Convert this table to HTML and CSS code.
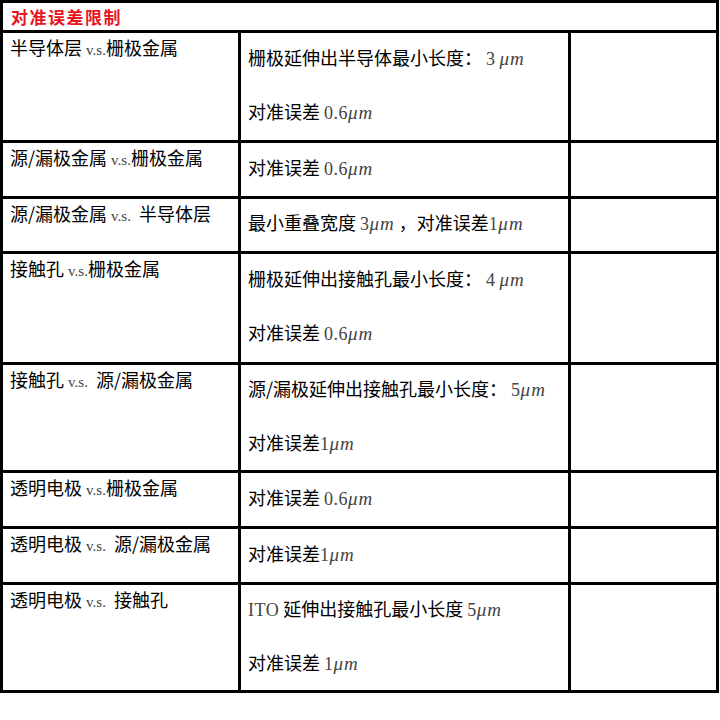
FILE: index.html
```html
<!DOCTYPE html>
<html lang="zh">
<head>
<meta charset="utf-8">
<link rel="stylesheet" href="styles.css">
</head>
<body>
<div class="grid">
  <div class="cell head">对准误差限制</div>

  <div class="cell c1 h107">半导体层 <span class="vs">v.s.</span>栅极金属</div>
  <div class="cell c2"><p>栅极延伸出半导体最小长度： <span class="num">3</span> <span class="um">μm</span></p><p>对准误差 <span class="num">0.6</span><span class="um">μm</span></p></div>
  <div class="cell c3"></div>

  <div class="cell c1">源/漏极金属 <span class="vs">v.s.</span>栅极金属</div>
  <div class="cell c2"><p>对准误差 <span class="num">0.6</span><span class="um">μm</span></p></div>
  <div class="cell c3"></div>

  <div class="cell c1">源/漏极金属 <span class="vs">v.s.</span>&nbsp; 半导体层</div>
  <div class="cell c2"><p>最小重叠宽度 <span class="num">3</span><span class="um">μm</span> ，对准误差<span class="num">1</span><span class="um">μm</span></p></div>
  <div class="cell c3"></div>

  <div class="cell c1">接触孔 <span class="vs">v.s.</span>栅极金属</div>
  <div class="cell c2"><p>栅极延伸出接触孔最小长度： <span class="num">4</span> <span class="um">μm</span></p><p>对准误差 <span class="num">0.6</span><span class="um">μm</span></p></div>
  <div class="cell c3"></div>

  <div class="cell c1">接触孔 <span class="vs">v.s.</span>&nbsp; 源/漏极金属</div>
  <div class="cell c2"><p>源/漏极延伸出接触孔最小长度： <span class="num">5</span><span class="um">μm</span></p><p>对准误差<span class="num">1</span><span class="um">μm</span></p></div>
  <div class="cell c3"></div>

  <div class="cell c1">透明电极 <span class="vs">v.s.</span>栅极金属</div>
  <div class="cell c2"><p>对准误差 <span class="num">0.6</span><span class="um">μm</span></p></div>
  <div class="cell c3"></div>

  <div class="cell c1">透明电极 <span class="vs">v.s.</span>&nbsp; 源/漏极金属</div>
  <div class="cell c2"><p>对准误差<span class="num">1</span><span class="um">μm</span></p></div>
  <div class="cell c3"></div>

  <div class="cell c1">透明电极 <span class="vs">v.s.</span>&nbsp; 接触孔</div>
  <div class="cell c2"><p><span class="num">ITO</span> 延伸出接触孔最小长度 <span class="num">5</span><span class="um">μm</span></p><p>对准误差 <span class="num">1</span><span class="um">μm</span></p></div>
  <div class="cell c3"></div>
</div>
</body>
</html>
```

FILE: styles.css
```css
html, body {
  margin: 0;
  padding: 0;
  background: #fff;
}

.grid {
  display: grid;
  width: 713px;
  grid-template-columns: 235px 327px 145px;
  grid-template-rows: 27px 107px 53px 52px 108px 105px 53px 53px 105px;
  gap: 3px;
  padding: 3px;
  background: #000;
  font-family: "Noto Sans CJK SC", "Liberation Sans", sans-serif;
  font-size: 18px;
  font-weight: 400;
  color: #000;
}

.cell {
  background: #fff;
  overflow: hidden;
}

.head {
  grid-column: 1 / 4;
  color: #e8141e;
  font-weight: bold;
  font-size: 17px;
  line-height: 27px;
  padding-left: 8px;
  letter-spacing: 1.5px;
}

.c1 {
  padding: 2px 7px 0;
  line-height: 24px;
  white-space: nowrap;
}

.c2 {
  display: flex;
  flex-direction: column;
  justify-content: center;
  gap: 28px;
  padding: 0 7px 4px;
  white-space: nowrap;
}

.c2 p {
  margin: 0;
  line-height: 24px;
}

.vs {
  font-family: "Liberation Serif", serif;
  font-size: 15px;
  color: #444;
}

.num {
  font-family: "Liberation Serif", serif;
  font-size: 18px;
  letter-spacing: 0.5px;
  color: #444;
}

.um {
  font-family: "Liberation Serif", serif;
  font-style: italic;
  font-size: 19px;
  letter-spacing: 1px;
  color: #444;
}
```
